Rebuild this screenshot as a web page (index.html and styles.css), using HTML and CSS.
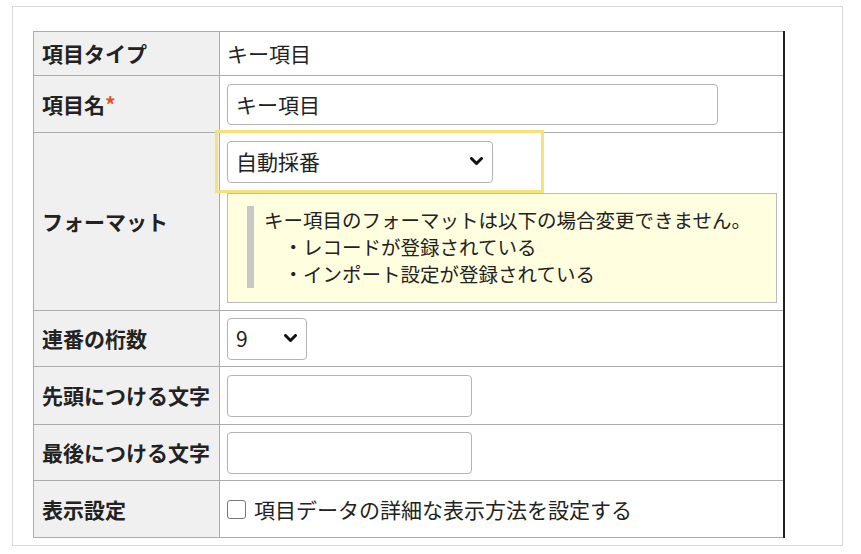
FILE: index.html
```html
<!DOCTYPE html>
<html lang="ja">
<head>
<meta charset="utf-8">
<title>キー項目</title>
<link rel="stylesheet" href="styles.css">
</head>
<body>
<div class="frame">
  <table class="form">
    <tr class="r1">
      <th>項目タイプ</th>
      <td>キー項目</td>
    </tr>
    <tr class="r2">
      <th>項目名<span class="req">*</span></th>
      <td><div class="input wide">キー項目</div></td>
    </tr>
    <tr class="r3">
      <th>フォーマット</th>
      <td>
        <div class="select sel-fmt"><span>自動採番</span>
          <svg class="chev" width="13" height="9" viewBox="0 0 13 9"><path d="M1.5 1.5 L6.5 6.5 L11.5 1.5" fill="none" stroke="#111" stroke-width="3" stroke-linecap="round" stroke-linejoin="round"/></svg>
        </div>
        <div class="note">
          <div class="note-text">キー項目のフォーマットは以下の場合変更できません。<br>　・レコードが登録されている<br>　・インポート設定が登録されている</div>
        </div>
      </td>
    </tr>
    <tr class="r4">
      <th>連番の桁数</th>
      <td>
        <div class="select sel-num"><span>9</span>
          <svg class="chev" width="13" height="9" viewBox="0 0 13 9"><path d="M1.5 1.5 L6.5 6.5 L11.5 1.5" fill="none" stroke="#111" stroke-width="3" stroke-linecap="round" stroke-linejoin="round"/></svg>
        </div>
      </td>
    </tr>
    <tr class="r5">
      <th>先頭につける文字</th>
      <td><div class="input short"></div></td>
    </tr>
    <tr class="r6">
      <th>最後につける文字</th>
      <td><div class="input short"></div></td>
    </tr>
    <tr class="r7">
      <th>表示設定</th>
      <td><label class="check"><span class="box"></span><span>項目データの詳細な表示方法を設定する</span></label></td>
    </tr>
  </table>
  <div class="highlight"></div>
</div>
</body>
</html>
```

FILE: styles.css
```css
* { box-sizing: border-box; }
html, body { margin: 0; padding: 0; background: #fff; }
body {
  font-family: "Noto Sans CJK JP", "Noto Sans", sans-serif;
  color: #222;
}
.frame {
  position: relative;
  margin: 6px 0 0 12px;
  width: 831px;
  height: 540px;
  border: 1px solid #d9d9d9;
  padding: 24px 0 0 20px;
}
.form {
  border-collapse: collapse;
  width: 752px;
  table-layout: fixed;
}
.form th, .form td {
  border: 1px solid #ababab;
  padding: 0 8px 0 7px;
  font-size: 21px;
  line-height: 1;
  vertical-align: middle;
  text-align: left;
}
.form td { border-right: 2px solid #222; }
.form th {
  width: 186px;
  background: #f0f0f0;
  font-weight: bold;
  padding-left: 8px;
  white-space: nowrap;
}
.r1 th, .r1 td { height: 44px; }
.r2 th, .r2 td { height: 57px; }
.r3 th, .r3 td { height: 178px; }
.r4 th, .r4 td { height: 56px; }
.r5 th, .r5 td { height: 58px; }
.r6 th, .r6 td { height: 56px; }
.r7 th, .r7 td { height: 57px; }
.req { color: #e05020; }
.input, .select {
  height: 42px;
  border: 1px solid #b3b3b3;
  border-radius: 4px;
  background: #fff;
  display: flex;
  align-items: center;
  padding: 0 8px;
  font-size: 21px;
  color: #222;
}
.input.wide { width: 491px; height: 41px; }
.input.short { width: 245px; }
.select { justify-content: space-between; padding-right: 9px; }
.sel-fmt { width: 266px; }
.sel-num { width: 80px; }
.note {
  margin-top: 10px;
  width: 550px;
  height: 110px;
  background: #ffffdf;
  border: 1px solid #bcbcbc;
  padding: 12px 0 0 19px;
}
.note-text {
  border-left: 7px solid #c8c8c8;
  padding-left: 10px;
  font-size: 19.5px;
  line-height: 27.4px;
  white-space: nowrap;
}
.check {
  display: flex;
  align-items: center;
  gap: 8px;
}
.box {
  width: 19px;
  height: 19px;
  border: 1.5px solid #777;
  border-radius: 3px;
  background: #fff;
}
.highlight {
  position: absolute;
  left: 202px;
  top: 123px;
  width: 329px;
  height: 63px;
  border: 3px solid #f5e27a;
  pointer-events: none;
}
```
